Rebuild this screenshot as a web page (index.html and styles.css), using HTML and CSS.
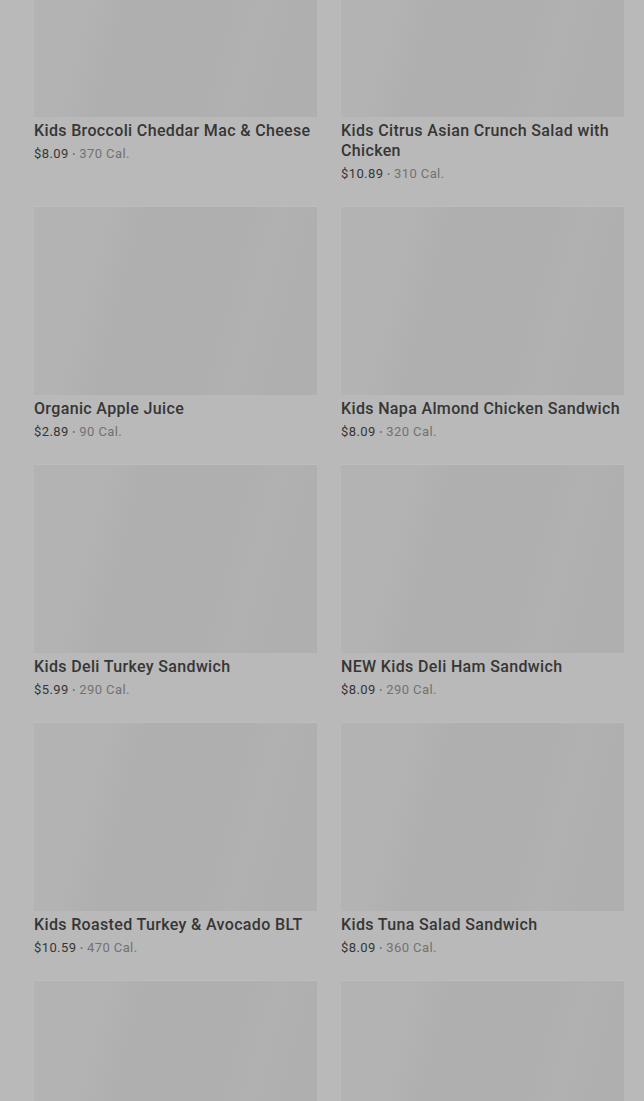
FILE: index.html
```html
<!DOCTYPE html>
<html lang="en">
<head>
    <meta charset="UTF-8">
    <meta name="viewport" content="width=device-width, initial-scale=1">
    <title>Kids Menu</title>
    <link rel="stylesheet" href="styles.css">
</head>
<body>

    <section class="menu">
        <div class="item">
            <div class="pic"></div>
            <h3>Kids Broccoli Cheddar Mac &amp; Cheese</h3>
            <p class="meta"><span class="price">$8.09</span> <i>•</i> 370 Cal.</p>
        </div>
        <div class="item">
            <div class="pic"></div>
            <h3>Kids Citrus Asian Crunch Salad with Chicken</h3>
            <p class="meta"><span class="price">$10.89</span> <i>•</i> 310 Cal.</p>
        </div>
        <div class="item">
            <div class="pic"></div>
            <h3>Organic Apple Juice</h3>
            <p class="meta"><span class="price">$2.89</span> <i>•</i> 90 Cal.</p>
        </div>
        <div class="item">
            <div class="pic"></div>
            <h3>Kids Napa Almond Chicken Sandwich</h3>
            <p class="meta"><span class="price">$8.09</span> <i>•</i> 320 Cal.</p>
        </div>
        <div class="item">
            <div class="pic"></div>
            <h3>Kids Deli Turkey Sandwich</h3>
            <p class="meta"><span class="price">$5.99</span> <i>•</i> 290 Cal.</p>
        </div>
        <div class="item">
            <div class="pic"></div>
            <h3>NEW Kids Deli Ham Sandwich</h3>
            <p class="meta"><span class="price">$8.09</span> <i>•</i> 290 Cal.</p>
        </div>
        <div class="item">
            <div class="pic"></div>
            <h3>Kids Roasted Turkey &amp; Avocado BLT</h3>
            <p class="meta"><span class="price">$10.59</span> <i>•</i> 470 Cal.</p>
        </div>
        <div class="item">
            <div class="pic"></div>
            <h3>Kids Tuna Salad Sandwich</h3>
            <p class="meta"><span class="price">$8.09</span> <i>•</i> 360 Cal.</p>
        </div>
        <div class="item">
            <div class="pic"></div>
        </div>
        <div class="item">
            <div class="pic"></div>
        </div>
    </section>

</body>
</html>
```

FILE: styles.css
```css
html,body {
	margin:0;
	padding:0;
	background:#b9b9b9;
	font-family:Roboto, "Liberation Sans", sans-serif;
	overflow:hidden;
}
.menu {
	display:grid;
	grid-template-columns:283px 283px;
	column-gap:24px;
	row-gap:23px;
	padding:0 20px 0 34px;
	margin-top:-72px;
}
.item {
	display:flex;
	flex-direction:column;
}
.pic {
	box-sizing:border-box;
	height:189px;
	border-top:1px solid #bdbdbd;
	background:linear-gradient(105deg, #b3b3b3 0%, #b3b3b3 22%, #afafaf 34%, #afafaf 64%, #b1b1b1 74%, #afafaf 86%);
}
.item h3 {
	margin:4px 0 0;
	font-size:16px;
	line-height:20px;
	font-weight:500;
	color:#363636;
	letter-spacing:0.35px;
}
.meta {
	margin:4px 0 0;
	font-size:13px;
	line-height:18px;
	color:#727272;
	letter-spacing:0.4px;
}
.meta i {
	font-style:normal;
	font-size:9px;
	line-height:0;
	vertical-align:1px;
}
.meta .price {
	color:#363636;
}
```
